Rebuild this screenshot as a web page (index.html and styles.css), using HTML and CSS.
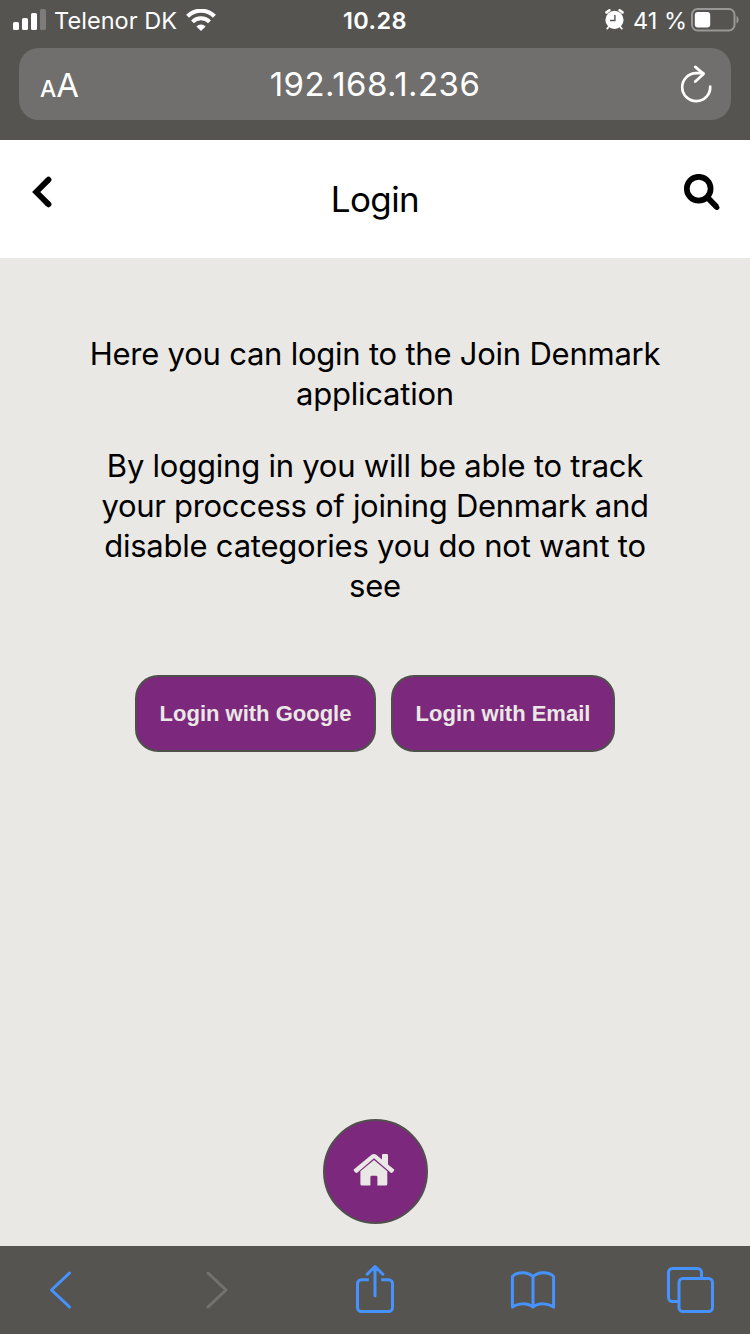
FILE: index.html
```html
<!DOCTYPE html>
<html lang="en">
<head>
<meta charset="utf-8">
<title>Login</title>
<link rel="stylesheet" href="styles.css">
</head>
<body>
<div class="screen">
  <header class="browser-top">
    <div class="status">
      <div class="status-left">
        <svg class="signal" width="33" height="21" viewBox="0 0 33 21">
          <rect x="0" y="13" width="6" height="8" rx="1.6" fill="#fff"/>
          <rect x="9" y="9" width="6" height="12" rx="1.6" fill="#fff"/>
          <rect x="18" y="4" width="6" height="17" rx="1.6" fill="#fff"/>
          <rect x="27" y="0" width="6" height="21" rx="1.6" fill="#7d7c7a"/>
        </svg>
        <span class="carrier">Telenor DK</span>
        <svg class="wifi" width="30" height="22" viewBox="0 0 30 22">
          <g fill="none" stroke="#fff">
            <path d="M1.6 7.3a19 19 0 0 1 26.8 0" stroke-width="4.2"/>
            <path d="M6.5 12.9a12 12 0 0 1 17 0" stroke-width="4"/>
          </g>
          <path d="M15 22l-4.600-4.600a6.500 6.500 0 0 1 9.200 0z" fill="#fff"/>
        </svg>
      </div>
      <span class="time">10.28</span>
      <div class="status-right">
        <svg class="alarm" width="19" height="21" viewBox="0 0 19 21">
          <g stroke="#fff" stroke-linecap="round" fill="none">
            <path d="M1.500 3.400L4.400 1.300M17.500 3.400L14.600 1.300" stroke-width="2.600"/>
            <path d="M4 17.500L2.200 19.600M15 17.500l1.800 2.100" stroke-width="1.700"/>
          </g>
          <circle cx="9.500" cy="10.900" r="9.100" fill="#fff"/>
          <path d="M9.900 6v5.500H5" fill="none" stroke="#555451" stroke-width="1.400"/>
        </svg>
        <span class="percent">41 %</span>
        <svg class="battery" width="48" height="24" viewBox="0 0 48 24">
          <rect x="1" y="1" width="42.500" height="21.500" rx="5.500" fill="none" stroke="#999896" stroke-width="2"/>
          <rect x="3.800" y="4" width="15.400" height="15.400" rx="3" fill="#fff"/>
          <path d="M45.500 8c2.800 1 2.800 6.400 0 7.500z" fill="#999896"/>
        </svg>
      </div>
    </div>
    <div class="address">
      <div class="reader"><span class="small-a">A</span><span class="big-a">A</span></div>
      <span class="url">192.168.1.236</span>
      <svg class="reload" width="32" height="38" viewBox="0 0 32 38" fill="none" stroke="#fff" stroke-width="2.700" stroke-linecap="round" stroke-linejoin="round">
        <path d="M30.200 21.500A14 14 0 1 1 16.200 8.200h7"/>
        <path d="M15.300 1.900l8.200 7-8.200 7.600"/>
      </svg>
    </div>
  </header>

  <nav class="page-nav">
    <svg class="back" width="20" height="32" viewBox="0 0 20 32" fill="none" stroke="#000" stroke-width="5.800" stroke-linejoin="miter">
      <path d="M16.300 3.900L4.200 16l12.100 12.100"/>
      <path d="M16.400 3.800l.1-.1M16.400 28.200l.1.100" stroke-linecap="round"/>
    </svg>
    <h1 class="title">Login</h1>
    <svg class="search" width="36" height="37" viewBox="0 0 36 37" fill="none" stroke="#000">
      <circle cx="14.700" cy="14.700" r="11.900" stroke-width="5.700"/>
      <path d="M22.500 22.500l10.200 10.600" stroke-width="5.800"/>
      <path d="M32.600 33.100l.3.300" stroke-width="5" stroke-linecap="round"/>
    </svg>
  </nav>

  <main class="content">
    <p class="intro"><span class="line">Here you can login to the Join Denmark</span> <span class="line">application</span></p>
    <p class="intro"><span class="line">By logging in you will be able to track</span> <span class="line tight">your proccess of joining Denmark and</span> <span class="line">disable categories you do not want to</span> <span class="line">see</span></p>
    <div class="actions">
      <button class="btn google">Login with Google</button>
      <button class="btn email">Login with Email</button>
    </div>
    <button class="home" aria-label="Home">
      <svg width="42" height="34" viewBox="0 0 42 34" fill="#e9e8e4">
        <path d="M7.400 18.200L21 7l13.300 11.200V31q0 1.600-1.600 1.600h-8.300V24q0-1.200-1.200-1.200h-4.600q-1.200 0-1.200 1.200v8.600H9q-1.600 0-1.600-1.600z"/>
        <path d="M1 16.300L18.600 1.800q2.300-1.800 4.600 0L29 6.500V2q0-1.100 1.100-1.100h3.800Q35 .9 35 2v9.400l5.900 4.900q.8.800 0 1.600l-1.400 1.700q-.8.900-1.700.1L21 5.200 4.200 19.700q-.9.800-1.700-.1L1 17.900q-.8-.8 0-1.600z"/>
      </svg>
    </button>
  </main>

  <footer class="toolbar">
    <svg class="t-back" width="24" height="40" viewBox="0 0 24 40"><path d="M21.500 3L3.500 20l18 17"/></svg>
    <svg class="t-forward" width="24" height="40" viewBox="0 0 24 40"><path d="M3 3l18 17L3 37"/></svg>
    <svg class="t-share" width="40" height="50" viewBox="0 0 40 50">
      <path d="M13.800 15.700H6.500a4 4 0 0 0-4 4v23.800a4 4 0 0 0 4 4h27a4 4 0 0 0 4-4V19.700a4 4 0 0 0-4-4h-7.300"/>
      <path d="M20 31.700V3M12.200 10.200L20 2.500l7.800 7.700" stroke-linecap="round"/>
    </svg>
    <svg class="t-book" width="46" height="40" viewBox="0 0 46 40">
      <path d="M23 6.500C18 2 8 1 2.400 6.500v30.600C8 33 17.500 32.600 23 37.100c5.500-4.500 15-4.100 20.600 0V6.500C38 1 28 2 23 6.500v30.600"/>
    </svg>
    <svg class="t-tabs" width="48" height="48" viewBox="0 0 48 48">
      <path d="M12 35.500H6.500a4 4 0 0 1-4-4v-25a4 4 0 0 1 4-4h25a4 4 0 0 1 4 4V12"/>
      <rect x="13" y="12.500" width="33.500" height="33" rx="4"/>
    </svg>
  </footer>
</div>
</body>
</html>
```

FILE: styles.css
```css
* { box-sizing: border-box; }

body {
  margin: 0;
  background: #e9e8e4;
  font-family: Inter, "Liberation Sans", sans-serif;
  color: #000;
}

.screen {
  width: 750px;
  height: 1334px;
  display: flex;
  flex-direction: column;
  overflow: hidden;
}

svg { display: block; flex: none; }

/* Browser chrome, top */
.browser-top {
  height: 140px;
  flex: none;
  background: #555451;
  color: #fff;
}

.status {
  height: 48px;
  padding: 0 11px 0 13px;
  display: grid;
  grid-template-columns: 1fr 66px 1fr;
  font-size: 23.5px;
  line-height: 42px;
  white-space: nowrap;
}

.status-left, .status-right { display: flex; }
.status-right { justify-content: flex-end; }
.signal { margin: 9px 8px 0 0; }
.carrier { width: 123px; letter-spacing: 0.05px; }
.wifi { margin: 9px 0 0 9px; }
.time { font-weight: 600; letter-spacing: 0.4px; }
.alarm { margin: 9px 9px 0 0; }
.percent { width: 58px; }
.battery { margin-top: 8px; }

.address {
  height: 72px;
  margin: 0 19px;
  padding: 0 19px 0 21px;
  border-radius: 20px;
  background: #706f6d;
  display: grid;
  grid-template-columns: 1fr auto 1fr;
}

.reader { line-height: 74px; white-space: nowrap; }
.small-a { font-size: 23px; font-weight: 500; }
.big-a { font-size: 33px; }
.url { font-size: 33px; line-height: 73px; letter-spacing: 0.45px; margin-left: -2px; }
.reload { justify-self: end; margin-top: 17px; }

/* Page header */
.page-nav {
  height: 118px;
  flex: none;
  background: #fff;
  padding: 0 30px 0 32px;
  display: grid;
  grid-template-columns: 1fr auto 1fr;
}

.back { margin-top: 36px; }
.title {
  margin: 0;
  padding-right: 2px;
  font-size: 35px;
  font-weight: 400;
  line-height: 119px;
  letter-spacing: -0.6px;
}
.search { justify-self: end; margin-top: 34px; }

/* Page content */
.content {
  flex: 1;
  display: flex;
  flex-direction: column;
  align-items: center;
  padding: 76px 0 22px;
}

.intro {
  margin: 0 0 32px;
  font-size: 31px;
  line-height: 40px;
  letter-spacing: -0.23px;
  text-align: center;
}

.line { display: block; white-space: nowrap; }
.tight { letter-spacing: -0.3px; }

.actions { display: flex; gap: 15px; margin-top: 37px; }

.btn {
  height: 77px;
  padding: 0;
  border: 2px solid #4f504c;
  border-radius: 23px;
  background: #7c297d;
  color: #e9e8e4;
  font: bold 22px "Liberation Sans", sans-serif;
  white-space: nowrap;
}

.google { width: 241px; }
.email { width: 224px; }

.home {
  width: 105px;
  height: 105px;
  margin-top: auto;
  padding: 0 2px 3px 0;
  border: 2px solid #4f504c;
  border-radius: 50%;
  background: #7c297d;
  display: flex;
  align-items: center;
  justify-content: center;
}

/* Browser chrome, bottom */
.toolbar {
  height: 88px;
  flex: none;
  padding-left: 48px;
  background: #555451;
  display: flex;
}

.toolbar svg {
  fill: none;
  stroke: #4693ff;
  stroke-width: 3;
  stroke-linejoin: round;
}

.toolbar .t-back, .toolbar .t-forward { margin-top: 24px; stroke-linecap: round; }
.toolbar .t-forward { margin-left: 133px; stroke: #73726f; }
.t-share { margin: 18px 0 0 126px; }
.t-book { margin: 24px 0 0 115px; }
.t-tabs { margin: 20px 0 0 110px; }
```
